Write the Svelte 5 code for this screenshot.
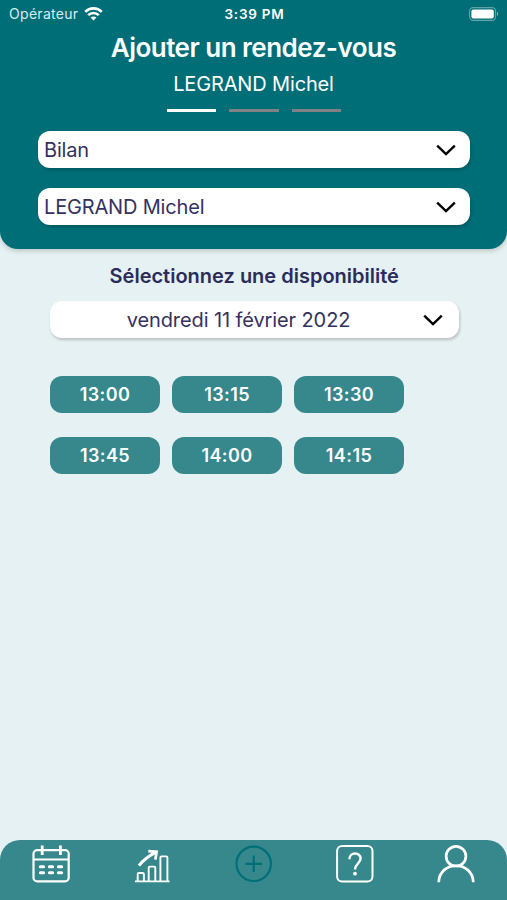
<script lang="ts">
	const steps = [1, 2, 3];
	let step = $state(1);

	const selects = ['Bilan', 'LEGRAND Michel'];
	const slots = ['13:00', '13:15', '13:30', '13:45', '14:00', '14:15'];
	let selected = $state<string | null>(null);
</script>

{#snippet chevron()}
	<svg class="chevron" width="20" height="12" viewBox="0 0 20 12">
		<path d="M1.2 1.7 L10 10 L18.8 1.7" fill="none" stroke="#000" stroke-width="2.4" />
	</svg>
{/snippet}

<div class="screen">
	<header>
		<div class="status">
			<div class="carrier">
				<span>Opérateur</span>
				<svg width="19" height="14" viewBox="0 0 19 14">
					<g fill="none" stroke="#fff" stroke-width="2.6">
						<path d="M1.2 4.8 C5.8 .2 13.2 .2 17.8 4.8" />
						<path d="M4.2 8.1 C7.2 5.2 11.8 5.2 14.8 8.1" />
					</g>
					<path d="M6.5 10.5 C8.1 9 10.9 9 12.5 10.5 L9.5 13.6 Z" fill="#fff" />
				</svg>
			</div>
			<span class="time">3:39 PM</span>
			<svg class="battery" width="31" height="14" viewBox="0 0 31 14">
				<rect x=".6" y=".6" width="26" height="12.8" rx="3.6" fill="none" stroke="#fff" stroke-opacity=".38" stroke-width="1.1" />
				<rect x="2.4" y="2.4" width="22.4" height="9.2" rx="2" fill="#fff" />
				<path d="M28 4.8 Q30.3 7 28 9.2 Z" fill="#fff" fill-opacity=".5" />
			</svg>
		</div>

		<h1>Ajouter un rendez-vous</h1>
		<p class="patient">LEGRAND Michel</p>

		<div class="steps">
			{#each steps as s}
				<span class:active={s === step}></span>
			{/each}
		</div>

		<div class="selects">
			{#each selects as label}
				<button class="select">
					<span>{label}</span>
					{@render chevron()}
				</button>
			{/each}
		</div>
	</header>

	<main>
		<h2>Sélectionnez une disponibilité</h2>
		<button class="select date">
			<span>vendredi 11 février 2022</span>
			{@render chevron()}
		</button>

		<div class="slots">
			{#each slots as slot}
				<button class="slot" aria-pressed={selected === slot} onclick={() => (selected = slot)}>{slot}</button>
			{/each}
		</div>
	</main>

	<nav>
		<!-- Calendar -->
		<svg width="38" height="38" viewBox="0 0 38 38" fill="none" stroke="#fff" stroke-width="2.2">
			<rect x="1.5" y="5.2" width="35.2" height="31.2" rx="3.6" />
			<path d="M1.3 14.5 H36.7" />
			<path d="M10.2 .5 V10 M28.4 .5 V10" stroke-width="2.8" />
			<path d="M8.4 21.7 h3.2 M17.4 21.7 h3.2 M26.4 21.7 h3.2 M8.4 27.8 h3.2 M17.4 27.8 h3.2 M26.4 27.8 h3.2" stroke-width="3" stroke-linecap="round" />
		</svg>
		<!-- Statistics -->
		<svg width="38" height="38" viewBox="0 0 38 38" fill="none" stroke="#fff" stroke-width="1.9">
			<path d="M2 36.4 H36.5" />
			<path d="M4.7 36 V29.2 q0 -1.2 1.2 -1.2 h3.8 q1.2 0 1.2 1.2 V36" />
			<path d="M15.7 36 V22.8 q0 -1.2 1.2 -1.2 h4.2 q1.2 0 1.2 1.2 V36" />
			<path d="M27.4 36 V12.6 q0 -1.2 1.2 -1.2 h4.6 q1.2 0 1.2 1.2 V36" />
			<path d="M5.9 20.6 Q12 13 22.6 7.4" stroke-width="3" />
			<path d="M15.3 6.2 L23.6 6.8 L22.4 14.6" stroke-width="2.7" />
		</svg>
		<!-- New appointment -->
		<svg width="38" height="38" viewBox="0 0 38 38" fill="none" stroke="#007078" stroke-width="2.2">
			<circle cx="18.7" cy="18.8" r="17.2" />
			<path d="M18.7 10.5 V27.1 M10.4 18.8 H27" />
		</svg>
		<!-- Help -->
		<svg width="38" height="38" viewBox="0 0 38 38" fill="none" stroke="#fff" stroke-width="2">
			<rect x="1.1" y="1.1" width="35.4" height="35.4" rx="5" />
			<path d="M13.4 14.3 C13.4 6.6 24.6 6.8 24.6 13.6 C24.6 18.5 19 18.3 19 24.6" stroke-width="2.4" />
			<circle cx="19" cy="28.7" r="1.9" fill="#fff" stroke="none" />
		</svg>
		<!-- Profile -->
		<svg width="38" height="38" viewBox="0 0 38 38" fill="none" stroke="#fff" stroke-width="2.7">
			<circle cx="19" cy="11.2" r="9.9" />
			<path d="M1.7 37.3 C2.4 15.2 35.6 15.2 36.3 37.3" />
		</svg>
	</nav>
</div>

<style>
	:global(body) {
		margin: 0;
	}

	.screen {
		display: flex;
		flex-direction: column;
		height: 900px;
		background: #e5f1f2;
		color: #2c2c5c;
		font-family: Inter, "Liberation Sans", sans-serif;
	}

	header {
		box-sizing: border-box;
		height: 249px;
		border-radius: 0 0 18px 18px;
		background: #006e77;
		box-shadow: 0 2px 5px rgba(0, 0, 0, 0.18);
		color: #fff;
	}

	.status {
		display: grid;
		grid-template-columns: 1fr auto 1fr;
		align-items: center;
		height: 27px;
		padding: 0 7px 0 9px;
		font-size: 14px;
	}

	.carrier {
		display: flex;
		align-items: center;
		gap: 5.5px;
		color: #d9edee;
		letter-spacing: 0.3px;
	}

	.time {
		font-size: 13.5px;
		font-weight: 600;
		letter-spacing: 0.75px;
	}

	.battery {
		justify-self: end;
	}

	h1,
	h2,
	p {
		margin: 0;
		text-align: center;
		white-space: nowrap;
	}

	h1 {
		height: 42px;
		font-size: 26px;
		font-weight: 600;
		line-height: 42px;
		letter-spacing: -0.52px;
	}

	.patient {
		height: 30px;
		font-size: 20px;
		line-height: 30px;
		letter-spacing: -0.15px;
	}

	.steps {
		display: flex;
		justify-content: center;
		gap: 13px;
		padding: 10px 0 0 1px;
	}

	.steps span {
		width: 49.3px;
		height: 2.5px;
		background: #808285;
	}

	.steps span.active {
		background: #fff;
	}

	.selects {
		display: flex;
		flex-direction: column;
		gap: 19.5px;
		padding: 19.5px 37px 0 37.5px;
	}

	button {
		border: 0;
		font-family: inherit;
	}

	.select {
		display: flex;
		align-items: center;
		justify-content: space-between;
		box-sizing: border-box;
		width: 100%;
		height: 37px;
		padding: 1px 14px 0 6.5px;
		border-radius: 12px;
		background: #fff;
		box-shadow: 1px 2px 3px rgba(0, 0, 0, 0.2);
		color: #34325f;
		font-size: 20px;
		letter-spacing: -0.17px;
		white-space: nowrap;
	}

	main {
		flex: 1;
		padding: 0 48.5px 0 50px;
	}

	h2 {
		height: 52px;
		font-size: 20px;
		font-weight: 600;
		line-height: 54px;
	}

	.date {
		padding-right: 15.5px;
		padding-left: 4px;
		letter-spacing: -0.1px;
	}

	.date span {
		flex: 1;
		text-align: center;
	}

	.slots {
		display: grid;
		grid-template-columns: repeat(3, 110px);
		gap: 24px 12px;
		padding-top: 38px;
	}

	.slot {
		height: 37px;
		padding: 0;
		border-radius: 12px;
		background: #36888d;
		color: #fff;
		font-size: 18px;
		font-weight: 600;
		letter-spacing: 0.4px;
	}

	nav {
		display: flex;
		justify-content: space-between;
		box-sizing: border-box;
		height: 60px;
		padding: 4.5px 32px 0;
		border-radius: 20px 20px 0 0;
		background: #36888d;
	}
</style>
